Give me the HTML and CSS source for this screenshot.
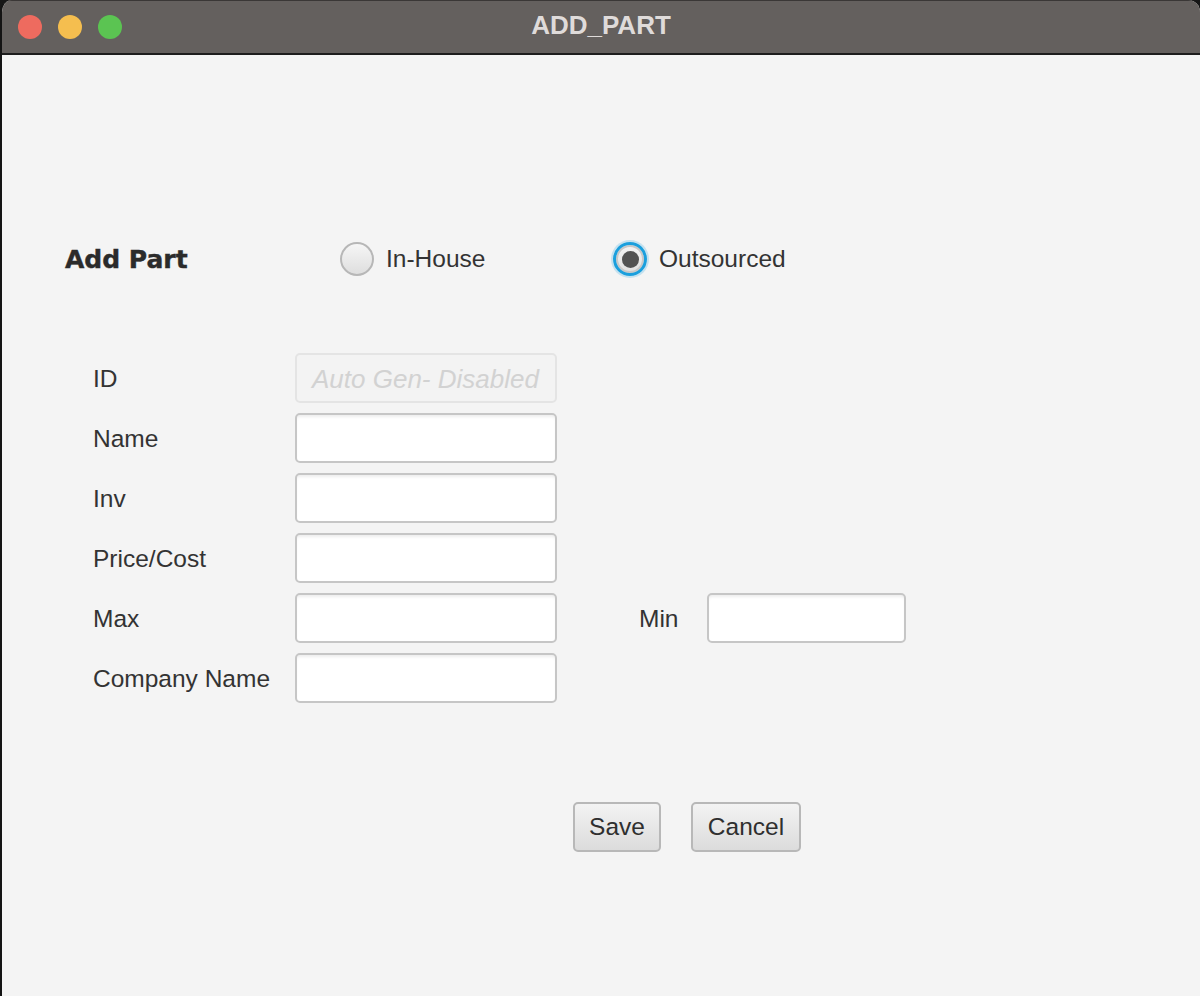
FILE: index.html
```html
<!DOCTYPE html>
<html>
<head>
<meta charset="utf-8">
<title>ADD_PART</title>
<link rel="stylesheet" href="styles.css">
</head>
<body>
<div class="window">
  <div class="titlebar">
    <div class="lights">
      <span class="light red"></span>
      <span class="light yellow"></span>
      <span class="light green"></span>
    </div>
    <div class="title">ADD_PART</div>
    <div class="spacer"></div>
  </div>
  <div class="content">
    <div class="header">
      <div class="heading">Add Part</div>
      <label class="radio radio-inhouse">
        <span class="circle"></span>
        <span class="radio-text">In-House</span>
      </label>
      <label class="radio radio-out">
        <span class="circle checked"><span class="dot"></span></span>
        <span class="radio-text">Outsourced</span>
      </label>
    </div>
    <div class="form">
      <div class="label">ID</div>
      <div class="field disabled">Auto Gen- Disabled</div>
      <div class="rest"></div>

      <div class="label">Name</div>
      <div class="field"></div>
      <div class="rest"></div>

      <div class="label">Inv</div>
      <div class="field"></div>
      <div class="rest"></div>

      <div class="label">Price/Cost</div>
      <div class="field"></div>
      <div class="rest"></div>

      <div class="label">Max</div>
      <div class="field"></div>
      <div class="rest minwrap">
        <div class="label minlabel">Min</div>
        <div class="field minfield"></div>
      </div>

      <div class="label">Company Name</div>
      <div class="field"></div>
      <div class="rest"></div>
    </div>
    <div class="buttons">
      <button class="btn save">Save</button>
      <button class="btn cancel">Cancel</button>
    </div>
  </div>
</div>
</body>
</html>
```

FILE: styles.css
```css
html, body {
  margin: 0;
  padding: 0;
  background: #161616;
  height: 996px;
  overflow: hidden;
}

.window {
  width: 1200px;
  height: 996px;
  box-sizing: border-box;
  background: #f4f4f4;
  border-left: 2px solid #141414;
  border-radius: 12px 12px 0 0;
  overflow: hidden;
  font-family: "Liberation Sans", Arial, sans-serif;
}

.titlebar {
  background: #64605e;
  border-top: 1px solid #3a3736;
  border-bottom: 2px solid #1d1d1d;
  display: grid;
  grid-template-columns: 1fr auto 1fr;
  align-items: center;
  box-sizing: border-box;
  height: 55px;
}

.lights {
  display: flex;
  gap: 16px;
  padding-left: 16px;
}

.light {
  width: 24px;
  height: 24px;
  border-radius: 50%;
  display: block;
}

.red { background: #ee6b5f; }
.yellow { background: #f5be4f; }
.green { background: #5bc452; }

.title {
  color: #dfdbda;
  font-weight: bold;
  font-size: 26px;
  padding-bottom: 3px;
}

.content {
  padding-left: 63px;
  padding-top: 184px;
}

.header {
  display: flex;
  align-items: center;
  height: 40px;
}

.heading {
  font-family: "DejaVu Sans", sans-serif;
  font-weight: bold;
  font-size: 25px;
  color: #2b2b2b;
  width: 275px;
  -webkit-text-stroke: 0.4px #2b2b2b;
}

.radio {
  display: flex;
  align-items: center;
  gap: 12px;
  color: #333;
  font-size: 24.5px;
}

.radio-inhouse {
  width: 273px;
}

.circle {
  width: 30px;
  height: 30px;
  border-radius: 50%;
  border: 2px solid #b7b7b7;
  background: linear-gradient(#f6f6f6, #dedede);
  display: flex;
  align-items: center;
  justify-content: center;
  flex: none;
}

.circle.checked {
  border: 3px solid #1a9fdd;
  width: 28px;
  height: 28px;
  background: linear-gradient(#f4f4f4, #e0e0e0);
  box-shadow: 0 0 0 2px rgba(26, 159, 221, 0.22), inset 0 0 0 2px #c8c8c8;
}

.dot {
  width: 17px;
  height: 17px;
  border-radius: 50%;
  background: #525252;
}

.form {
  margin-top: 74px;
  margin-left: 28px;
  display: grid;
  grid-template-columns: 202px 262px 1fr;
  grid-auto-rows: 50px;
  row-gap: 10px;
  align-items: center;
}

.label {
  color: #333;
  font-size: 24.5px;
  padding-top: 1px;
}

.field {
  height: 50px;
  box-sizing: border-box;
  border: 2px solid #c6c6c6;
  border-radius: 5px;
  background: #fff;
  box-shadow: inset 0 3px 3px -1px rgba(0, 0, 0, 0.07);
}

.field.disabled {
  border-color: #e4e4e4;
  background: #f3f3f3;
  box-shadow: none;
  color: #d2d2d2;
  font-style: italic;
  font-size: 26px;
  display: flex;
  align-items: center;
  padding-left: 15px;
  padding-top: 2px;
}

.minwrap {
  display: flex;
  align-items: center;
  padding-left: 82px;
}

.minlabel {
  width: 68px;
}

.minfield {
  width: 199px;
}

.buttons {
  display: flex;
  gap: 30px;
  margin-top: 99px;
  margin-left: 508px;
}

.btn {
  height: 50px;
  box-sizing: border-box;
  border: 2px solid #b8b8b8;
  border-radius: 5px;
  background: linear-gradient(#f3f3f3, #dcdcdc);
  font-family: "Liberation Sans", Arial, sans-serif;
  font-size: 24.5px;
  color: #2f2f2f;
  padding: 0;
}

.save { width: 88px; }
.cancel { width: 110px; }
```
